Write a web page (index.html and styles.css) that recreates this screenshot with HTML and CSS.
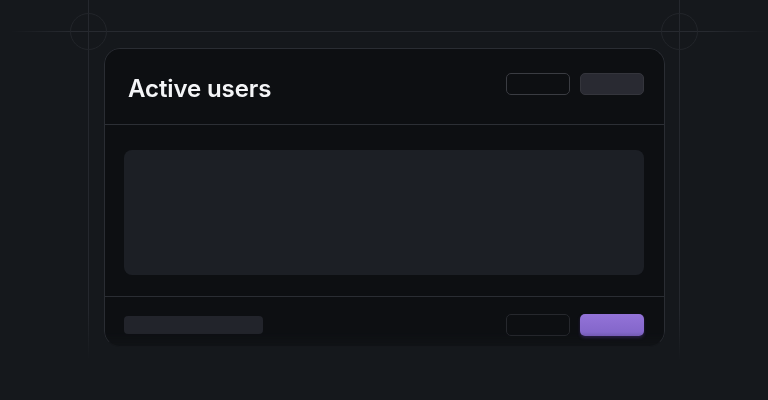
FILE: index.html
```html
<!DOCTYPE html>
<html lang="en">
<head>
<meta charset="utf-8">
<title>Active users</title>
<link rel="stylesheet" href="styles.css">
</head>
<body>
<div class="stage">
  <div class="guide guide-h"></div>
  <div class="guide guide-v guide-left"></div>
  <div class="guide guide-v guide-right"></div>
  <div class="ring ring-left"></div>
  <div class="ring ring-right"></div>

  <section class="card">
    <header class="card-header">
      <h1 class="title">Active users</h1>
      <div class="actions">
        <span class="btn btn-outline"></span>
        <span class="btn btn-muted"></span>
      </div>
    </header>
    <div class="card-body">
      <div class="placeholder"></div>
    </div>
    <footer class="card-footer">
      <span class="pill"></span>
      <div class="actions">
        <span class="btn btn-ghost"></span>
        <span class="btn btn-primary"></span>
      </div>
    </footer>
  </section>
</div>
</body>
</html>
```

FILE: styles.css
```css
* { box-sizing: border-box; }

html, body {
  margin: 0;
  padding: 0;
  background: #15181c;
  font-family: Inter, "Liberation Sans", sans-serif;
}

.stage {
  position: relative;
  width: 768px;
  height: 400px;
  overflow: hidden;
  padding: 48px 0 0 104px;
}

.guide {
  position: absolute;
  pointer-events: none;
}

.guide-h {
  top: 31px;
  left: 10px;
  width: 758px;
  height: 1px;
  background: linear-gradient(to right, rgba(40,43,49,0) 0%, #272a30 8%, #272a30 92%, rgba(40,43,49,0) 100%);
}

.guide-v {
  top: 0;
  width: 1px;
  height: 360px;
  background: linear-gradient(to bottom, #25282e 0%, #25282e 86%, rgba(37,40,46,0) 100%);
}

.guide-left { left: 88px; }
.guide-right { left: 679px; }

.ring {
  position: absolute;
  width: 37px;
  height: 37px;
  border: 1px solid #22252a;
  border-radius: 50%;
}

.ring-left { left: 70px; top: 13px; }
.ring-right { left: 661px; top: 13px; }

.card {
  position: relative;
  width: 561px;
  height: 299px;
  background: #0d0f12;
  border: 1px solid #2a2d33;
  border-bottom-color: #15171b;
  border-radius: 16px;
  box-shadow: 0 12px 28px rgba(0, 0, 0, 0.35);
  display: flex;
  flex-direction: column;
  overflow: hidden;
  -webkit-mask-image: linear-gradient(to bottom, #000 0%, #000 95%, rgba(0,0,0,0.55) 100%);
  mask-image: linear-gradient(to bottom, #000 0%, #000 95%, rgba(0,0,0,0.55) 100%);
}

.card-header {
  height: 76px;
  padding: 0 20px 0 23px;
  display: flex;
  align-items: center;
  justify-content: space-between;
  border-bottom: 1px solid #2c2f35;
}

.title {
  margin: 4px 0 0;
  font-size: 24px;
  font-weight: 600;
  color: #f4f5f7;
  letter-spacing: -0.1px;
}

.actions {
  display: flex;
  gap: 10px;
}

.card-header .actions { margin-top: -5px; }

.btn {
  display: block;
  width: 64px;
  height: 22px;
  border-radius: 5px;
}

.btn-outline {
  border: 1px solid #3a3c42;
  background: #0d0f12;
}

.btn-muted {
  background: #292a32;
  border: 1px solid #34353c;
}

.btn-ghost {
  border: 1px solid #26282d;
  background: #0d0f12;
}

.btn-primary {
  background: linear-gradient(to bottom, #9373d8, #8164c8);
  box-shadow: 0 2px 3px rgba(60, 40, 110, 0.6);
}

.card-body {
  padding: 25px 20px 21px 19px;
  border-bottom: 1px solid #2a2d33;
}

.placeholder {
  height: 125px;
  border-radius: 8px;
  background: #1c1f25;
}

.card-footer {
  flex: 1;
  padding: 17px 20px 0 19px;
  display: flex;
  justify-content: space-between;
  align-items: flex-start;
}

.pill {
  display: block;
  width: 139px;
  height: 18px;
  margin-top: 2px;
  border-radius: 4px;
  background: #22242b;
}
```
